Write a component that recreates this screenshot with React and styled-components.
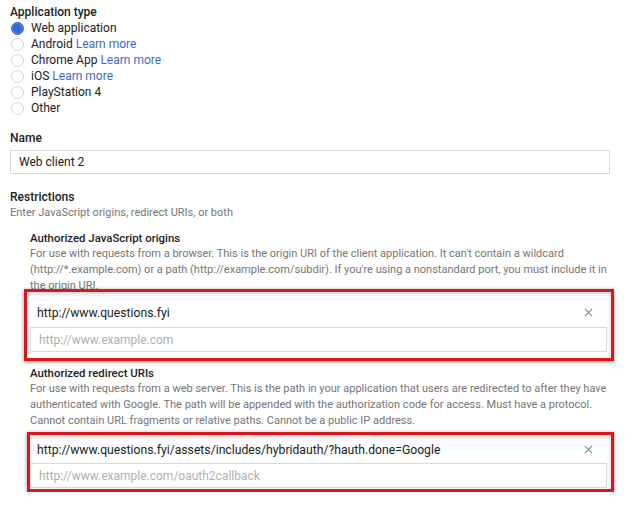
import React from 'react'
import styled, { createGlobalStyle } from 'styled-components'

const GlobalStyle = createGlobalStyle`
	html, body {
		margin: 0;
		padding: 0;
		background: #fff;
	}
	body {
		font-family: Roboto, "Liberation Sans", Arial, sans-serif;
		color: #212121;
		-webkit-font-smoothing: antialiased;
	}
`

const Page = styled.div`
	width: 600px;
	padding: 4px 0 0 10px;
`

const Label = styled.div`
	font-size: 12px;
	font-weight: 500;
	line-height: 16px;
	color: #212121;
	margin-top: ${p => p.$gap || 0}px;
`

const Hint = styled.div`
	font-size: 11px;
	line-height: 16px;
	color: #757575;
`

const RadioList = styled.div`
	display: flex;
	flex-direction: column;
`

const RadioRow = styled.label`
	display: flex;
	align-items: center;
	height: 16px;
	font-size: 12px;
	color: #212121;
	gap: 7px;
`

const RadioDot = styled.span`
	box-sizing: border-box;
	width: 13px;
	height: 13px;
	margin-left: 1px;
	border-radius: 50%;
	border: 1px solid ${p => (p.$checked ? '#3367d6' : '#d6d6d6')};
	background: ${p => (p.$checked ? '#3367d6' : '#fff')};
	box-shadow: ${p => (p.$checked ? 'inset 0 0 0 1px #5b86e0' : 'none')};
`

const Link = styled.a`
	color: #3f6ac8;
	text-decoration: none;
	margin-left: 3px;
`

const TextField = styled.div`
	box-sizing: border-box;
	height: ${p => p.$h || 24}px;
	margin-top: ${p => p.$gap || 0}px;
	border: 1px solid #d9d9d9;
	display: flex;
	align-items: center;
	padding-left: 8px;
	font-size: 12px;
	color: ${p => (p.$placeholder ? '#b0b0b0' : '#212121')};
	background: #fff;
`

const SubSection = styled.div`
	padding-left: 20px;
	margin-top: ${p => p.$gap || 0}px;
`

const SubTitle = styled.div`
	font-size: 11.4px;
	font-weight: 500;
	line-height: 16px;
	color: #212121;
`

const Highlight = styled.div`
	position: relative;
	margin: ${p => p.$top}px -4px 0 ${p => -p.$left}px;
	padding: ${p => p.$padTop}px 4px ${p => p.$padBottom}px ${p => p.$left - 3}px;
	border: 3px solid #d7161e;
	box-shadow: 0 1px 4px rgba(0, 0, 0, 0.45), inset 0 2px 4px rgba(0, 0, 0, 0.18);
	background: #fff;
`

const EntryRow = styled.div`
	display: flex;
	align-items: center;
	justify-content: space-between;
	height: ${p => p.$h}px;
	padding: 0 14px 0 7px;
	font-size: 12.2px;
	color: #212121;
`

const ClearIcon = () => (
	<svg width="9" height="9" viewBox="0 0 10 10">
		<path d="M1 1L9 9M9 1L1 9" stroke="#8a8a8a" strokeWidth="1.3" fill="none" />
	</svg>
)

const types = [
	{ name: 'Web application', checked: true },
	{ name: 'Android', link: true },
	{ name: 'Chrome App', link: true },
	{ name: 'iOS', link: true },
	{ name: 'PlayStation 4' },
	{ name: 'Other' },
]

const App = () => {
	return (
		<Page>
			<GlobalStyle />
			<Label>Application type</Label>
			<RadioList>
				{types.map(t => (
					<RadioRow key={t.name}>
						<RadioDot $checked={t.checked} />
						<span>
							{t.name}
							{t.link && <Link href="#">Learn more</Link>}
						</span>
					</RadioRow>
				))}
			</RadioList>

			<Label $gap={14}>Name</Label>
			<TextField $gap={4}>Web client 2</TextField>

			<Label $gap={15}>Restrictions</Label>
			<Hint>Enter JavaScript origins, redirect URIs, or both</Hint>

			<SubSection $gap={9}>
				<SubTitle>Authorized JavaScript origins</SubTitle>
				<Hint>
					For use with requests from a browser. This is the origin URI of the client application. It can't contain a wildcard
					(http://*.example.com) or a path (http://example.com/subdir). If you're using a nonstandard port, you must include it in
					the origin URI.
				</Hint>
				<Highlight $top={-5} $left={6} $padTop={6} $padBottom={6}>
					<EntryRow $h={29}>
						<span>http://www.questions.fyi</span>
						<ClearIcon />
					</EntryRow>
					<TextField $h={25} $placeholder>http://www.example.com</TextField>
				</Highlight>
			</SubSection>

			<SubSection $gap={4}>
				<SubTitle>Authorized redirect URIs</SubTitle>
				<Hint>
					For use with requests from a web server. This is the path in your application that users are redirected to after they have
					authenticated with Google. The path will be appended with the authorization code for access. Must have a protocol.
					Cannot contain URL fragments or relative paths. Cannot be a public IP address.
				</Hint>
				<Highlight $top={3} $left={3} $padTop={1} $padBottom={1}>
					<EntryRow $h={27}>
						<span>http://www.questions.fyi/assets/includes/hybridauth/?hauth.done=Google</span>
						<ClearIcon />
					</EntryRow>
					<TextField $h={25} $placeholder>http://www.example.com/oauth2callback</TextField>
				</Highlight>
			</SubSection>
		</Page>
	)
}

export default App
